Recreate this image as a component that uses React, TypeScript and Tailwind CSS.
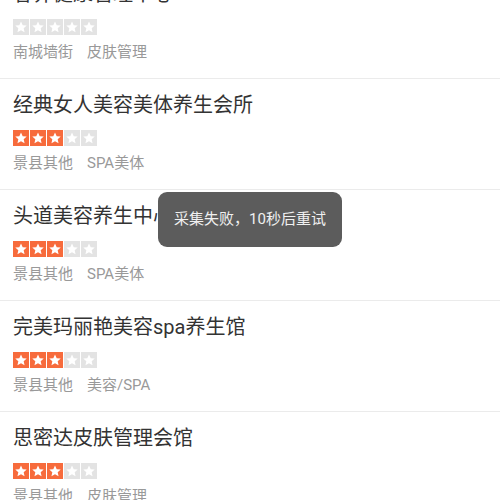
import React from 'react';

type Shop = { name: string; stars: number; area: string; tag: string };

const shops: Shop[] = [
  { name: '容养健康管理中心', stars: 0, area: '南城墙街', tag: '皮肤管理' },
  { name: '经典女人美容美体养生会所', stars: 3, area: '景县其他', tag: 'SPA美体' },
  { name: '头道美容养生中心', stars: 3, area: '景县其他', tag: 'SPA美体' },
  { name: '完美玛丽艳美容spa养生馆', stars: 3, area: '景县其他', tag: '美容/SPA' },
  { name: '思密达皮肤管理会馆', stars: 3, area: '景县其他', tag: '皮肤管理' },
];

const StarBox: React.FC<{ on: boolean }> = ({ on }) => (
  <div className={`w-4 h-4 flex items-center justify-center ${on ? 'bg-[#f76b3c]' : 'bg-[#e3e3e3]'}`}>
    <svg viewBox="0 0 24 24" className="w-[14px] h-[14px]" fill="#ffffff">
      <path d="M12 2.5l2.9 6.3 6.9.7-5.2 4.6 1.5 6.8L12 17.4l-6.1 3.5 1.5-6.8-5.2-4.6 6.9-.7z" />
    </svg>
  </div>
);

const App: React.FC = () => {
  return (
    <div className="relative w-[500px] h-[500px] overflow-hidden bg-white" style={{ fontFamily: 'Roboto, "Noto Sans CJK SC", sans-serif' }}>
      <div className="-mt-[32px]">
        {shops.map((s, i) => (
          <div key={i} className="h-[111px] border-b border-[#ebebeb] px-[13px] pt-[10px]">
            <div className="text-[20px] leading-[32px] text-[#333333]">{s.name}</div>
            <div className="flex gap-px mt-[9px]">
              {[0, 1, 2, 3, 4].map(k => (
                <StarBox key={k} on={k < s.stars} />
              ))}
            </div>
            <div className="flex gap-[14px] mt-[6px] text-[15px] leading-[22px] text-[#999999]">
              <span>{s.area}</span>
              <span>{s.tag}</span>
            </div>
          </div>
        ))}
      </div>

      {/* toast */}
      <div className="absolute left-[158px] top-[192px] w-[184px] h-[55px] rounded-[9px] bg-[#5c5c5c] flex items-center justify-center text-[15px] text-[#f0f0f0]">
        采集失败，10秒后重试
      </div>
    </div>
  );
};

export default App;
